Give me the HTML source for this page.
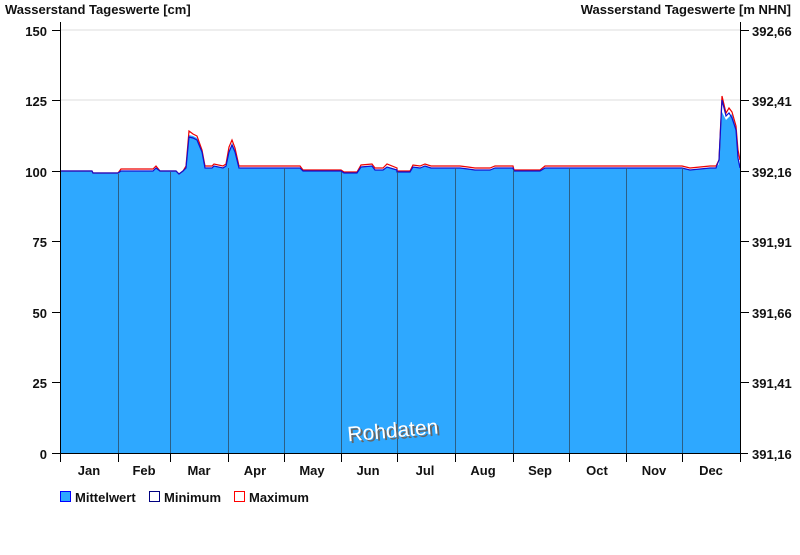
<!DOCTYPE html>
<html><head><meta charset="utf-8"><style>
body{margin:0;background:#fff;width:800px;height:550px;overflow:hidden;font-family:"Liberation Sans",Arial,sans-serif}
</style></head><body>
<svg width="800" height="550" xmlns="http://www.w3.org/2000/svg" font-family="Liberation Sans, Arial, sans-serif" font-weight="bold" font-size="13">
<text x="5" y="14" font-size="13" fill="#111">Wasserstand Tageswerte [cm]</text>
<text x="791" y="14" font-size="13" fill="#111" text-anchor="end">Wasserstand Tageswerte [m NHN]</text>
<line x1="61" y1="30" x2="740" y2="30" stroke="#ddd"/>
<line x1="61" y1="100" x2="740" y2="100" stroke="#ddd"/>
<polygon fill="#2ea8ff" points="61,453 61,171 92,171 93,173 118,173 121,171 153,171 156,168 160,171 170,171 176,171 179,174 183,171 186,168 189,135 193,136 197,138 202,150 205,168 212,168 214,166 223,168 226,166 229,151 232,143 235,150 239,168 300,168 303,171 341,171 344,173 357,173 361,167 372,166 375,170 383,170 387,167 397,170 397,172 410,172 413,167 420,168 425,166 431,168 455,168 460,168 468,169 475,170 490,170 495,168 513,168 514,171 540,171 545,168 569,168 626,168 682,168 690,170 710,168 716,168 719,164 722,112 726,120 729,117 732,114 736,128 738,158 740,164 740,453"/>
<polyline fill="none" stroke="#e00" stroke-width="1.2" points="61,171 92,171 93,173 118,173 121,169 153,169 156,166 160,171 170,171 176,171 179,174 183,171 186,166 189,131 193,134 197,136 202,150 205,166 212,166 214,164 223,166 226,164 229,147 232,140 235,148 239,166 300,166 303,170 341,170 344,172 357,172 361,165 372,164 375,168 383,168 387,164 397,168 397,171 410,171 413,165 420,166 425,164 431,166 455,166 460,166 468,167 475,168 490,168 495,166 513,166 514,170 540,170 545,166 569,166 626,166 682,166 690,168 710,166 716,166 719,160 722,96 726,113 729,108 732,112 736,126 738,150 740,160"/>
<polyline fill="none" stroke="#1010d0" stroke-width="1.2" points="61,171 92,171 93,173 118,173 121,171 153,171 156,168 160,171 170,171 176,171 179,174 183,171 186,168 189,137 193,138 197,140 202,152 205,168 212,168 214,166 223,168 226,166 229,152 232,145 235,152 239,168 300,168 303,171 341,171 344,173 357,173 361,167 372,166 375,170 383,170 387,167 397,170 397,172 410,172 413,167 420,168 425,166 431,168 455,168 460,168 468,169 475,170 490,170 495,168 513,168 514,171 540,171 545,168 569,168 626,168 682,168 690,170 710,168 716,168 719,160 722,100 726,116 729,113 732,118 736,130 738,158 740,168"/>
<g stroke="#2b5f86" stroke-width="1">
<line x1="118.5" y1="174" x2="118.5" y2="453"/><line x1="170.5" y1="172" x2="170.5" y2="453"/><line x1="228.5" y1="168" x2="228.5" y2="453"/><line x1="284.5" y1="168" x2="284.5" y2="453"/><line x1="341.5" y1="172" x2="341.5" y2="453"/><line x1="397.5" y1="172" x2="397.5" y2="453"/><line x1="455.5" y1="168" x2="455.5" y2="453"/><line x1="513.5" y1="170" x2="513.5" y2="453"/><line x1="569.5" y1="168" x2="569.5" y2="453"/><line x1="626.5" y1="168" x2="626.5" y2="453"/><line x1="682.5" y1="168" x2="682.5" y2="453"/>
</g>
<g stroke="#000" stroke-width="1">
<line x1="60.5" y1="22" x2="60.5" y2="454"/>
<line x1="740.5" y1="22" x2="740.5" y2="454"/>
<line x1="52" y1="453.5" x2="748" y2="453.5"/>
<line x1="52" y1="30.5" x2="61" y2="30.5"/><line x1="52" y1="100.5" x2="61" y2="100.5"/><line x1="52" y1="171.5" x2="61" y2="171.5"/><line x1="52" y1="241.5" x2="61" y2="241.5"/><line x1="52" y1="312.5" x2="61" y2="312.5"/><line x1="52" y1="382.5" x2="61" y2="382.5"/>
<line x1="740" y1="30.5" x2="749" y2="30.5"/><line x1="740" y1="100.5" x2="749" y2="100.5"/><line x1="740" y1="171.5" x2="749" y2="171.5"/><line x1="740" y1="241.5" x2="749" y2="241.5"/><line x1="740" y1="312.5" x2="749" y2="312.5"/><line x1="740" y1="382.5" x2="749" y2="382.5"/>
<line x1="60.5" y1="453" x2="60.5" y2="462"/><line x1="118.5" y1="453" x2="118.5" y2="462"/><line x1="170.5" y1="453" x2="170.5" y2="462"/><line x1="228.5" y1="453" x2="228.5" y2="462"/><line x1="284.5" y1="453" x2="284.5" y2="462"/><line x1="341.5" y1="453" x2="341.5" y2="462"/><line x1="397.5" y1="453" x2="397.5" y2="462"/><line x1="455.5" y1="453" x2="455.5" y2="462"/><line x1="513.5" y1="453" x2="513.5" y2="462"/><line x1="569.5" y1="453" x2="569.5" y2="462"/><line x1="626.5" y1="453" x2="626.5" y2="462"/><line x1="682.5" y1="453" x2="682.5" y2="462"/><line x1="740.5" y1="453" x2="740.5" y2="462"/>
</g>
<g text-anchor="end" fill="#111" font-size="13">
<text x="47" y="36">150</text><text x="47" y="106">125</text><text x="47" y="177">100</text><text x="47" y="247">75</text><text x="47" y="318">50</text><text x="47" y="388">25</text><text x="47" y="459">0</text>
</g>
<g fill="#111" font-size="13">
<text x="752" y="36">392,66</text><text x="752" y="106">392,41</text><text x="752" y="177">392,16</text><text x="752" y="247">391,91</text><text x="752" y="318">391,66</text><text x="752" y="388">391,41</text><text x="752" y="459">391,16</text>
</g>
<g text-anchor="middle" fill="#111" font-size="13">
<text x="89" y="475">Jan</text><text x="144" y="475">Feb</text><text x="199" y="475">Mar</text><text x="255" y="475">Apr</text><text x="312" y="475">May</text><text x="368" y="475">Jun</text><text x="425" y="475">Jul</text><text x="483" y="475">Aug</text><text x="540" y="475">Sep</text><text x="597" y="475">Oct</text><text x="654" y="475">Nov</text><text x="711" y="475">Dec</text>
</g>
<g transform="rotate(-5 398 428)" font-weight="normal" font-size="21">
<text x="349" y="439" fill="#666">Rohdaten</text>
<text x="347" y="437" fill="#fff">Rohdaten</text>
</g>
<rect x="60.5" y="491.5" width="10" height="10" fill="#2ea8ff" stroke="#0000ff"/>
<text x="75" y="502" fill="#111">Mittelwert</text>
<rect x="149.5" y="491.5" width="10" height="10" fill="#fff" stroke="#000080"/>
<text x="164" y="502" fill="#111">Minimum</text>
<rect x="234.5" y="491.5" width="10" height="10" fill="#fff" stroke="#ff0000"/>
<text x="249" y="502" fill="#111">Maximum</text>
</svg>
</body></html>
